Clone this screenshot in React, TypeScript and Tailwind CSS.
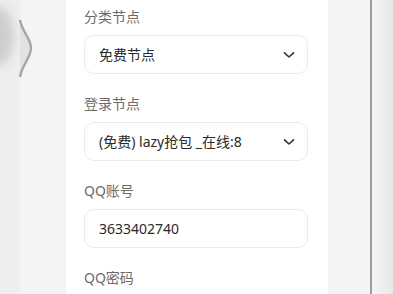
import React from "react";

const Chevron = () => (
  <svg width="12" height="8" viewBox="0 0 12 8" fill="none">
    <path d="M1.5 1.8 L6 6 L10.5 1.8" stroke="#333" strokeWidth="1.6" strokeLinecap="round" strokeLinejoin="round" />
  </svg>
);

const Label = ({ children }: { children: React.ReactNode }) => (
  <div className="h-[20px] text-[14px] leading-[20px] text-[#6b6b6b] mb-[8px]">{children}</div>
);

const Box = ({ children, chevron }: { children: React.ReactNode; chevron?: boolean }) => (
  <div className="h-[39px] rounded-[10px] border border-[#ebebeb] bg-white flex items-center justify-between pl-[14px] pr-[12px] mb-[20px]">
    <span className="text-[14px] text-[#2b2b2b] leading-[20px]">{children}</span>
    {chevron && <Chevron />}
  </div>
);

export default function App() {
  return (
    <div
      className="w-[393px] h-[294px] overflow-hidden flex bg-[#f4f4f4]"
      style={{ fontFamily: '"Noto Sans", "Noto Sans CJK SC", sans-serif' }}
    >
      <div className="relative w-[66px] h-full flex">
        <div className="w-[20px] h-full bg-[#eeeeee]" />
        <svg className="absolute left-0 top-0" width="66" height="294" viewBox="0 0 66 294">
          <defs>
            <filter id="b" x="-50%" y="-50%" width="200%" height="200%">
              <feGaussianBlur stdDeviation="5" />
            </filter>
          </defs>
          <ellipse cx="-2" cy="36" rx="16" ry="30" fill="#bdbdbd" filter="url(#b)" />
          <rect x="0" y="0" width="20" height="294" fill="#eeeeee" opacity="0.35" />
          <path d="M20 20 C 22 32, 31 38, 31 48 C 31 58, 22 64, 20 77 Z" fill="#e2e2e2" />
          <path d="M20 20 C 22 32, 31 38, 31 48 C 31 58, 22 64, 20 77" stroke="#a6a6a6" strokeWidth="2.4" fill="none" />
        </svg>
      </div>
      <div className="w-[262px] h-full bg-white pl-[18px] pr-[20px] pt-[7px]">
        <Label>分类节点</Label>
        <Box chevron>免费节点</Box>
        <Label>登录节点</Label>
        <Box chevron>(免费) lazy抢包 _在线:8</Box>
        <Label>QQ账号</Label>
        <Box>3633402740</Box>
        <Label>QQ密码</Label>
      </div>
      <div className="flex-1 h-full flex">
        <div className="w-[42px] h-full bg-[#f4f4f4]" />
        <div className="w-[2px] h-full bg-[#9e9e9e]" />
        <div className="flex-1 h-full bg-gradient-to-r from-[#f4f4f4] to-[#e8e8e8]" />
      </div>
    </div>
  );
}
